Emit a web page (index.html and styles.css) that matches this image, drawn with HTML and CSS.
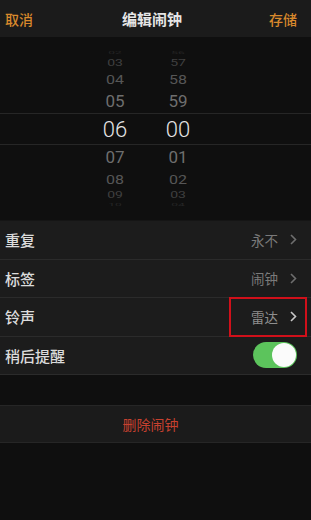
FILE: index.html
```html
<!DOCTYPE html>
<html lang="zh">
<head>
<meta charset="utf-8">
<link rel="stylesheet" href="styles.css">
</head>
<body>
<div class="screen">
  <header class="nav">
    <span class="nav-btn">取消</span>
    <span class="nav-title">编辑闹钟</span>
    <span class="nav-btn">存储</span>
  </header>

  <section class="picker">
    <div class="band"></div>
    <div class="cols">
      <div class="col">
        <div class="it r4">02</div>
        <div class="it r3">03</div>
        <div class="it r2">04</div>
        <div class="it r1">05</div>
        <div class="it sel">06</div>
        <div class="it r1">07</div>
        <div class="it r2">08</div>
        <div class="it r3">09</div>
        <div class="it r4">10</div>
      </div>
      <div class="col">
        <div class="it r4">56</div>
        <div class="it r3">57</div>
        <div class="it r2">58</div>
        <div class="it r1">59</div>
        <div class="it sel">00</div>
        <div class="it r1">01</div>
        <div class="it r2">02</div>
        <div class="it r3">03</div>
        <div class="it r4">04</div>
      </div>
    </div>
  </section>

  <section class="list">
    <div class="row">
      <span class="label">重复</span>
      <span class="value">永不<svg class="chev" viewBox="0 0 7 11"><path d="M1 1l4.5 4.5L1 10"/></svg></span>
    </div>
    <div class="row">
      <span class="label">标签</span>
      <span class="value">闹钟<svg class="chev" viewBox="0 0 7 11"><path d="M1 1l4.5 4.5L1 10"/></svg></span>
    </div>
    <div class="row ring">
      <span class="label">铃声</span>
      <span class="value">雷达<svg class="chev" viewBox="0 0 7 11"><path d="M1 1l4.5 4.5L1 10"/></svg></span>
      <div class="mark"></div>
    </div>
    <div class="row">
      <span class="label">稍后提醒</span>
      <span class="toggle"><span class="knob"></span></span>
    </div>
  </section>

  <section class="delete">删除闹钟</section>
</div>
</body>
</html>
```

FILE: styles.css
```css
* { box-sizing: border-box; margin: 0; padding: 0; }
html, body { background: #0f0f0f; }
body {
  width: 311px;
  height: 520px;
  overflow: hidden;
  font-family: "Noto Sans CJK SC", "Noto Sans", sans-serif;
}
.screen { width: 311px; height: 520px; background: #0f0f0f; }

.nav {
  height: 37px;
  background: #1b1b1b;
  display: flex;
  align-items: center;
  justify-content: space-between;
  padding: 0 14px 0 5px;
}
.nav-btn { color: #d9892c; font-size: 14px; line-height: 20px; font-weight: 500; }
.nav-title { color: #e6e6e6; font-size: 15px; line-height: 20px; font-weight: 700; margin-left: 2px; }

.picker {
  position: relative;
  height: 183px;
  padding: 12px 0 11px;
}
.band {
  position: absolute;
  left: 0; right: 0;
  top: 76px;
  height: 32px;
  border-top: 1px solid #262626;
  border-bottom: 1px solid #262626;
}
.cols {
  display: grid;
  grid-template-columns: 40px 40px;
  column-gap: 23px;
  padding-left: 95px;
  font-family: Roboto, "Liberation Sans", sans-serif;
}
.col { display: flex; flex-direction: column; align-items: center; }
.it {
  display: flex;
  align-items: center;
  justify-content: center;
  width: 40px;
}
.sel { height: 32px; font-size: 22px; color: #e4e4e4; font-weight: 300; }
.r1 { height: 24px; font-size: 17px; color: #6e6e6e; }
.r2 { height: 20px; font-size: 16px; color: #565656; transform: scaleY(0.85); }
.r3 { height: 12px; font-size: 14px; color: #404040; transform: scaleY(0.6); }
.r4 { height: 8px; font-size: 12px; color: #262626; transform: scaleY(0.35); }

.list {
  background: #1c1c1c;
  border-top: 1px solid #151515;
}
.row {
  position: relative;
  height: 38.5px;
  border-bottom: 1px solid #2b2b2b;
  display: flex;
  align-items: center;
  justify-content: space-between;
  padding: 0 14px 0 5px;
}
.label { color: #dcdcdc; font-size: 15px; font-weight: 500; }
.value {
  display: flex;
  align-items: center;
  color: #7a7a7a;
  font-size: 13.5px;
}
.chev {
  width: 7px;
  height: 11px;
  margin-left: 12px;
  fill: none;
  stroke: #6e6e6e;
  stroke-width: 1.6;
}
.ring .value { color: #8e8e8e; }
.ring .chev { stroke: #c8c8c8; }
.mark {
  position: absolute;
  left: 229px;
  top: -1px;
  width: 78px;
  height: 40px;
  border: 2px solid #d0101a;
}
.toggle {
  position: relative;
  width: 44px;
  height: 26px;
  border-radius: 13px;
  background: #5cc45c;
}
.knob {
  position: absolute;
  right: 1px;
  top: 1px;
  width: 24px;
  height: 24px;
  border-radius: 50%;
  background: #fbfbfb;
}

.delete {
  margin-top: 30px;
  height: 38px;
  background: #1b1b1b;
  border-top: 1px solid #262626;
  border-bottom: 1px solid #262626;
  display: flex;
  align-items: center;
  justify-content: center;
  color: #c7412f;
  font-size: 14px;
  padding-right: 10px;
}
```
